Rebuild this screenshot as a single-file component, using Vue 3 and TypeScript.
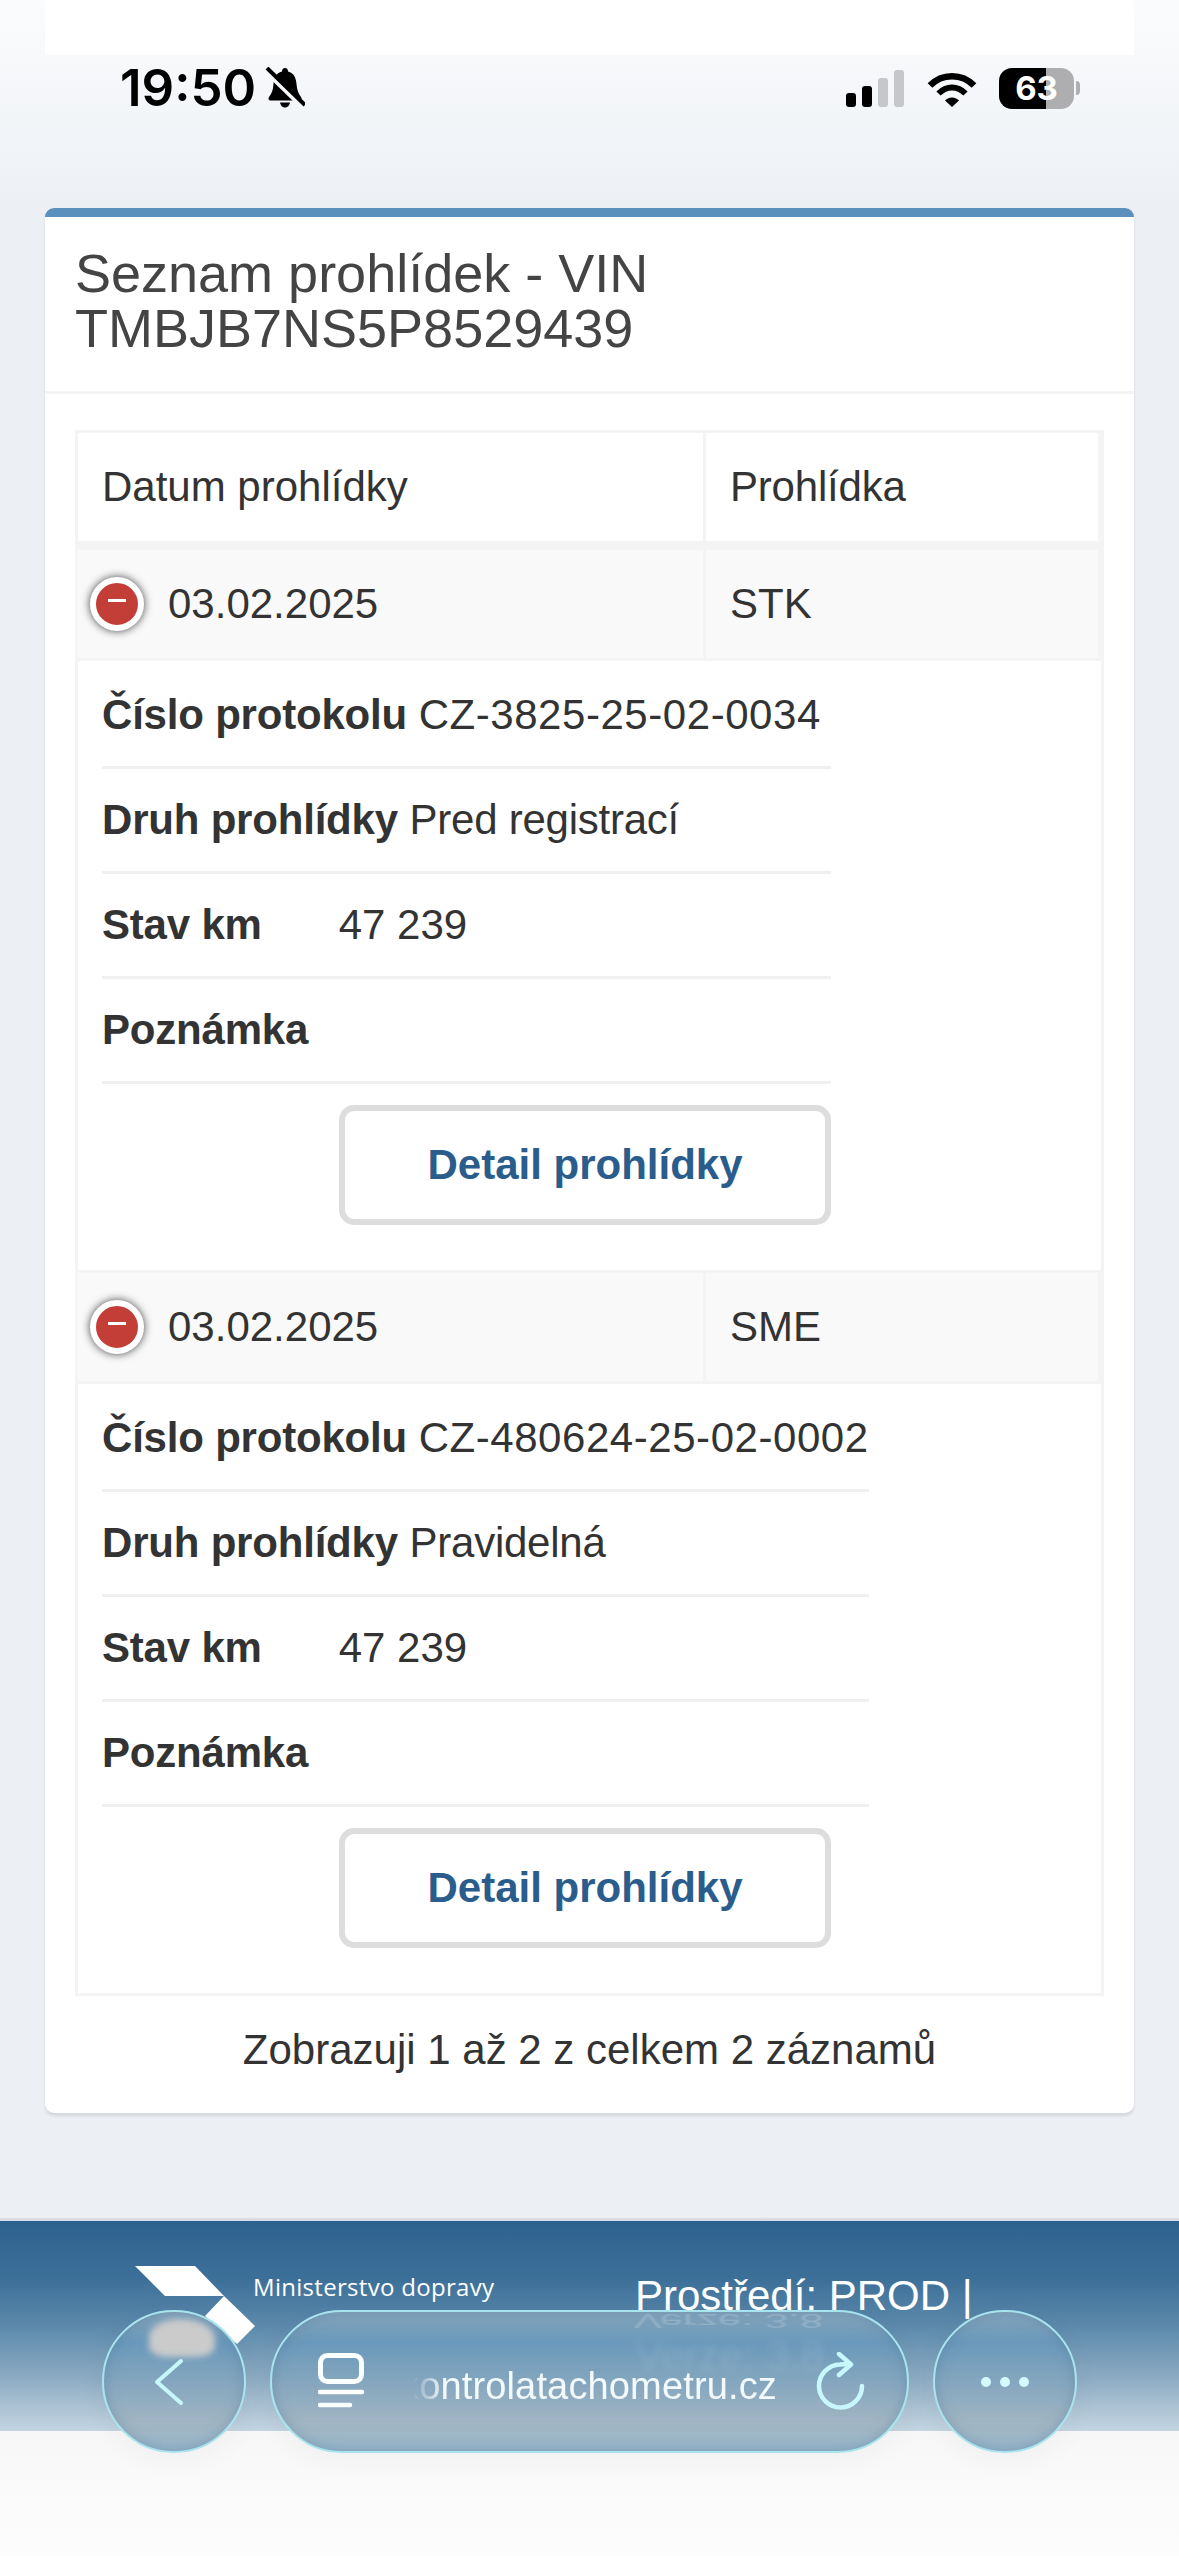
<template>
  <div class="phone">
    <div class="top-strip"></div>

    <div class="status-bar">
      <div class="status-left">
        <span class="time">19:50</span>
        <svg class="bell" viewBox="0 0 40 42" width="40" height="42">
          <path d="M20 1c-2 0-3 1.400-3 3.500C11 6 9 11 8.500 17c-.4 6-2 10-4.500 13-1.200 1.500-.4 3.500 1.500 3.500h29c2 0 2.700-2 1.500-3.500-2.500-3-4-7-4.500-13C31 11 29 6 23 4.500 23 2.400 22 1 20 1z" fill="#000" />
          <path d="M15 35.500h10c-.4 3-2.500 5-5 5s-4.600-2-5-5z" fill="#000" />
          <path d="M0 4l38 37" stroke="#f6f7fa" stroke-width="4" />
          <path d="M2 1l38 37" stroke="#000" stroke-width="4" />
        </svg>
      </div>
      <div class="status-right">
        <div class="signal">
          <i class="bar on b1"></i>
          <i class="bar on b2"></i>
          <i class="bar b3"></i>
          <i class="bar b4"></i>
        </div>
        <svg class="wifi" viewBox="0 0 50 37" width="50" height="37">
          <path d="M3 15.500C15 3 35 3 47 15.500" fill="none" stroke="#000" stroke-width="6.500" />
          <path d="M11.500 23.500C19.500 15.500 30.500 15.500 38.500 23.500" fill="none" stroke="#000" stroke-width="6" />
          <path d="M18 30.500c4-4 10-4 14 0l-7 6.500z" fill="#000" />
        </svg>
        <div class="battery"><span>63</span></div>
        <i class="battery-nub"></i>
      </div>
    </div>

    <main class="content">
      <section class="box">
        <header class="box-header">
          <h3>Seznam prohlídek - VIN TMBJB7NS5P8529439</h3>
        </header>
        <div class="box-body">
          <table class="inspections">
            <thead>
              <tr>
                <th class="col-date">Datum prohlídky</th>
                <th class="col-type">Prohlídka</th>
              </tr>
            </thead>
            <tbody>
              <template v-for="item in inspections" :key="item.protocol">
                <tr class="parent">
                  <td class="date-cell">
                    <span class="toggle"></span>
                    {{ item.date }}
                  </td>
                  <td>{{ item.type }}</td>
                </tr>
                <tr class="child">
                  <td colspan="2">
                    <ul>
                      <li><span class="title">Číslo protokolu</span> <span class="protocol">{{ item.protocol }}</span></li>
                      <li><span class="title">Druh prohlídky</span> <span class="kind">{{ item.kind }}</span></li>
                      <li><span class="title">Stav km</span> {{ item.km }}</li>
                      <li><span class="title">Poznámka</span></li>
                      <li class="actions">
                        <button class="detail-btn" type="button">Detail prohlídky</button>
                      </li>
                    </ul>
                  </td>
                </tr>
              </template>
            </tbody>
          </table>
          <p class="info">Zobrazuji 1 až 2 z celkem 2 záznamů</p>
        </div>
      </section>
    </main>

    <footer class="site-footer">
      <div class="brand">
        <svg class="logo" viewBox="0 0 120 78" width="120" height="78">
          <path d="M0 0h60l29 30H30z" fill="#fff" />
          <path d="M89 30l31 30-18 18-32-28z" fill="#fff" />
        </svg>
        <span class="ministry">Ministerstvo dopravy</span>
      </div>
      <div class="env">
        <div>Prostředí: PROD |</div>
        <div>Verze: 3.8</div>
      </div>
    </footer>
    <div class="bottom-area"></div>

    <nav class="glass-bar">
      <button class="glass round" type="button" aria-label="Zpět">
        <span class="blob"></span>
        <svg viewBox="0 0 144 143" width="144" height="143" class="fill-icon">
          <path d="M80 52L56 73l24 21" fill="none" stroke="#c8f7fb" stroke-width="4" stroke-linecap="round" stroke-linejoin="round" />
        </svg>
      </button>
      <div class="glass pill">
        <span class="reflection">Verze: 3.8</span>
        <svg class="tabs" viewBox="0 0 46 60" width="46" height="60">
          <rect x="2.500" y="2.500" width="41" height="26" rx="7" fill="none" stroke="#fbfeff" stroke-width="5" />
          <path d="M2 39h42M2 52h30" stroke="#fbfeff" stroke-width="4.500" stroke-linecap="round" />
        </svg>
        <div class="url"><span>kontrolatachometru.cz</span></div>
        <svg class="reload" viewBox="0 0 50 64" width="50" height="64">
          <path d="M46 34a21.500 21.500 0 1 1-22-21.500l10-.5" fill="none" stroke="#c8f8fd" stroke-width="4.500" stroke-linecap="round" />
          <path d="M23 2l12 10.500L23 23" fill="none" stroke="#c8f8fd" stroke-width="4.500" stroke-linecap="round" stroke-linejoin="round" />
        </svg>
      </div>
      <button class="glass round dots" type="button" aria-label="Více">
        <i></i><i></i><i></i>
      </button>
    </nav>
  </div>
</template>

<script setup lang="ts">
interface Inspection {
  date: string;
  type: string;
  protocol: string;
  kind: string;
  km: string;
}

const inspections: Inspection[] = [
  {
    date: '03.02.2025',
    type: 'STK',
    protocol: 'CZ-3825-25-02-0034',
    kind: 'Pred registrací',
    km: '47 239'
  },
  {
    date: '03.02.2025',
    type: 'SME',
    protocol: 'CZ-480624-25-02-0002',
    kind: 'Pravidelná',
    km: '47 239'
  }
];
</script>

<style>
html,
body {
  margin: 0;
  background: #fff;
}
</style>

<style scoped>
.phone {
  position: relative;
  width: 1179px;
  height: 2556px;
  overflow: hidden;
  display: flex;
  flex-direction: column;
  background: linear-gradient(#fbfcfd, #ecf0f5 210px);
  font-family: 'Liberation Sans', Arial, sans-serif;
  font-size: 42px;
  line-height: 60px;
  color: #333;
}

.top-strip {
  height: 55px;
  margin: 0 45px;
  background: #fff;
  flex: none;
}

.status-bar {
  height: 153px;
  flex: none;
  display: flex;
  justify-content: space-between;
  align-items: flex-start;
  padding: 12px 99px 0 120px;
  box-sizing: border-box;
}

.status-left {
  display: flex;
  align-items: center;
  gap: 9px;
}

.time {
  font-family: Inter, sans-serif;
  font-size: 51px;
  font-weight: 600;
  line-height: 42px;
  color: #000;
}

.status-right {
  display: flex;
  align-items: center;
  height: 42px;
}

.signal {
  display: flex;
  align-items: flex-end;
  gap: 6px;
  height: 37px;
  margin-right: 23px;
}

.bar {
  display: block;
  width: 10px;
  border-radius: 3px;
  background: #c5c7ca;
}

.bar.on {
  background: #000;
}

.b1 {
  height: 14px;
}

.b2 {
  height: 21px;
}

.b3 {
  height: 29px;
}

.b4 {
  height: 37px;
}

.wifi {
  margin-right: 22px;
}

.battery {
  width: 75px;
  height: 41px;
  border-radius: 13px;
  background: linear-gradient(90deg, #000 47px, #aeaeb0 47px);
  color: #fff;
  font-family: Inter, sans-serif;
  font-size: 33px;
  font-weight: 700;
  line-height: 41px;
  text-align: center;
}

.battery-nub {
  width: 4px;
  height: 14px;
  margin-left: 2px;
  border-radius: 0 7px 7px 0;
  background: #aeaeb0;
}

.content {
  flex: none;
  height: 2010px;
  padding: 0 45px;
  box-sizing: border-box;
}

.box {
  background: #fff;
  border-top: 9px solid #5b90bc;
  border-radius: 9px;
  box-shadow: 0 3px 3px rgba(0, 0, 0, 0.1);
}

.box-header {
  padding: 29px 30px 35px;
  border-bottom: 3px solid #f4f4f4;
}

.box-header h3 {
  margin: 0;
  font-size: 54px;
  font-weight: 400;
  line-height: 55px;
  color: #444;
  width: 800px;
}

.box-body {
  padding: 36px 30px 33px;
}

.inspections {
  width: 1029px;
  table-layout: fixed;
  border-collapse: separate;
  border-spacing: 0;
  border: 3px solid #f4f4f4;
}

.inspections th,
.inspections td {
  padding: 24px;
  text-align: left;
  font-weight: 400;
  border-right: 3px solid #f4f4f4;
}

.inspections th {
  border-bottom: 6px solid #f4f4f4;
}

.inspections th.col-date {
  width: 577px;
}

.col-type {
  letter-spacing: -0.2px;
}

.parent td {
  background: #f9f9f9;
  border-top: 3px solid #f4f4f4;
}

.inspections .date-cell {
  position: relative;
  padding-left: 90px;
}

.toggle {
  position: absolute;
  top: 27px;
  left: 12px;
  width: 54px;
  height: 54px;
  box-sizing: border-box;
  border: 6px solid #fff;
  border-radius: 50%;
  background: #c43e38;
  box-shadow: 0 0 9px #444;
}

.toggle::before {
  content: '';
  position: absolute;
  left: 12px;
  top: 16px;
  width: 18px;
  height: 3px;
  background: #fff;
}

.inspections .child td {
  padding: 3px 0 45px 24px;
  border-top: 3px solid #f4f4f4;
  border-right: 0;
}

.child ul {
  list-style: none;
  margin: 0;
  padding: 0;
  width: fit-content;
}

.child li {
  padding: 21px 0;
  border-bottom: 3px solid #f0f0f0;
  white-space: nowrap;
}

.child li.actions {
  padding: 21px 0 0;
  border-bottom: 0;
}

.title {
  display: inline-block;
  min-width: 225px;
  font-weight: 700;
  letter-spacing: -0.2px;
}

.protocol {
  letter-spacing: 0.55px;
}

.kind {
  letter-spacing: -0.25px;
}

.detail-btn {
  display: block;
  width: 492px;
  height: 120px;
  margin-left: 237px;
  padding: 0;
  background: #fff;
  border: 6px solid #ddd;
  border-radius: 15px;
  font: 700 42px/60px 'Liberation Sans', Arial, sans-serif;
  color: #2a5d8c;
}

.info {
  margin: 0;
  padding-top: 24px;
  text-align: center;
}

.site-footer {
  flex: none;
  height: 213px;
  box-sizing: border-box;
  display: flex;
  padding: 45px 0 0 135px;
  border-top: 3px solid #d9dde3;
  color: #fff;
  background: linear-gradient(#2e628e, #3d7099 28%, #5f8cad 52%, #8fadc4 76%, #c4d5e1);
}

.brand {
  width: 500px;
  display: flex;
  align-items: flex-start;
}

.logo {
  flex: none;
}

.ministry {
  margin-left: -2px;
  margin-top: 5px;
  font-family: 'Open Sans', sans-serif;
  font-size: 24px;
  line-height: 32px;
  letter-spacing: 0.3px;
}

.bottom-area {
  flex: 1;
  background: linear-gradient(#f7f7f7, #fdfdfd);
}

.glass-bar {
  position: absolute;
  top: 2310px;
  left: 102px;
  display: flex;
  gap: 24px;
}

.glass {
  position: relative;
  height: 143px;
  box-sizing: border-box;
  padding: 0;
  border: 2.5px solid #a8e4ee;
  border-radius: 72px;
  overflow: hidden;
  background: linear-gradient(rgba(140, 170, 190, 0.88), rgba(106, 153, 187, 0.9) 22%, rgba(158, 178, 192, 0.9) 80%, rgba(143, 176, 198, 0.95));
  backdrop-filter: blur(3px);
  box-shadow: inset 0 0 14px rgba(70, 110, 140, 0.35), 0 6px 30px rgba(0, 0, 0, 0.04);
}

.round {
  width: 144px;
}

.fill-icon {
  position: absolute;
  top: -3px;
  left: -3px;
}

.blob {
  position: absolute;
  left: 45px;
  top: 7px;
  width: 66px;
  height: 38px;
  border-radius: 50% 55% 30% 30%;
  background: #cbcbcb;
  filter: blur(3px);
}

.pill {
  width: 639px;
  display: flex;
  align-items: center;
  padding-left: 46px;
}

.reflection {
  position: absolute;
  left: 362px;
  top: -21px;
  font-size: 42px;
  color: rgba(255, 255, 255, 0.18);
  filter: blur(1px);
  transform: scaleY(-0.5);
}

.tabs {
  flex: none;
  margin-top: 2px;
}

.url {
  width: 370px;
  margin-left: 43px;
  margin-top: 8px;
  overflow: hidden;
  display: flex;
  justify-content: flex-end;
  white-space: nowrap;
  font-size: 38px;
  letter-spacing: 0.15px;
  color: #f2fafc;
  mask-image: linear-gradient(90deg, transparent 6px, #000 38px);
}

.reload {
  flex: none;
  margin-left: 39px;
  margin-top: 4px;
}

.dots {
  display: flex;
  align-items: center;
  justify-content: center;
  gap: 9px;
}

.dots i {
  width: 10px;
  height: 10px;
  border-radius: 50%;
  background: #d4fbfe;
}
</style>
